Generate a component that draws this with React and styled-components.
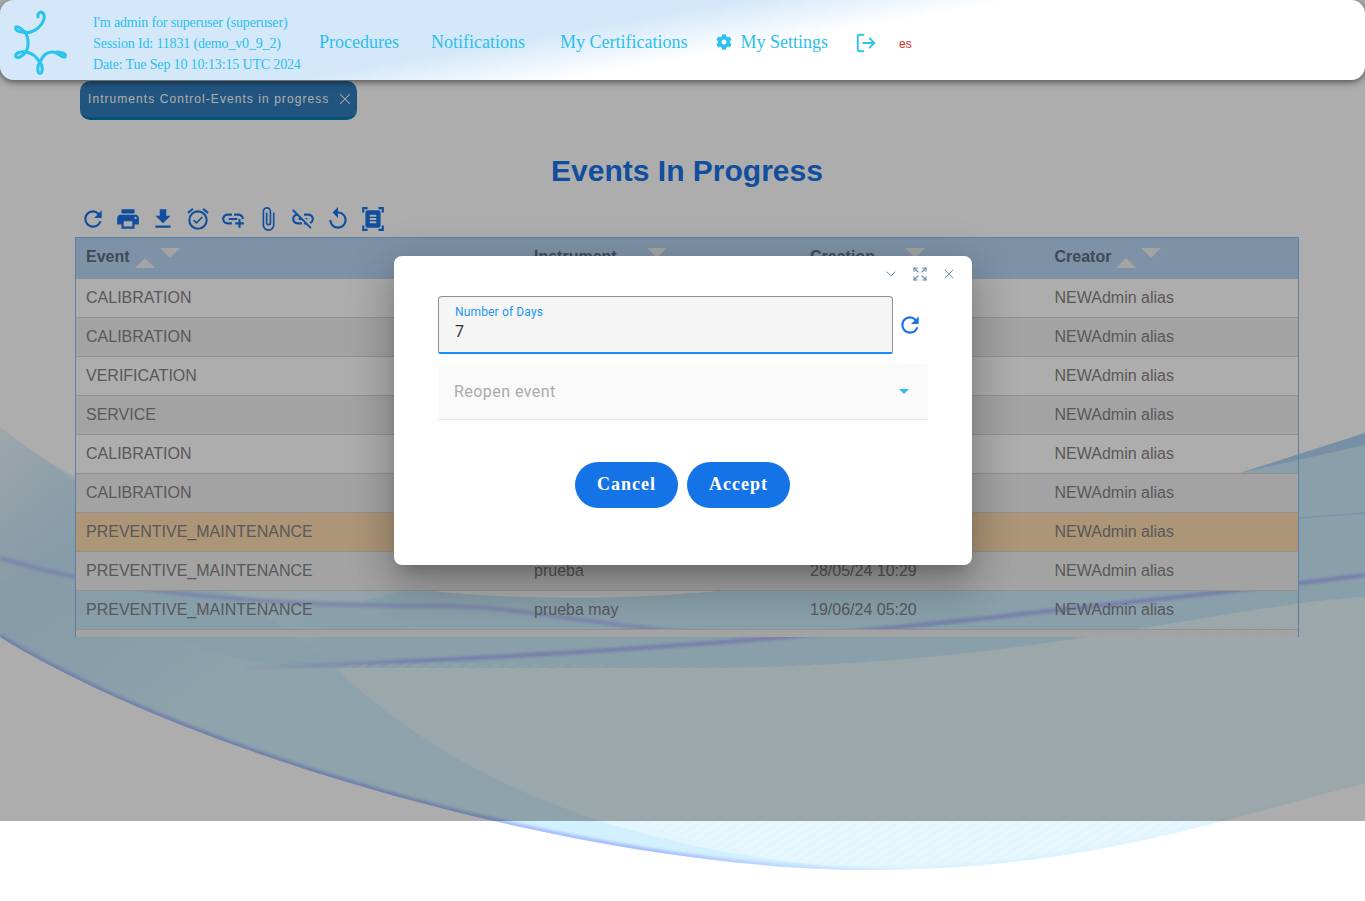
import styled, { createGlobalStyle } from "styled-components";
import { FaCog } from "react-icons/fa";
import { LogOut, ChevronDown, Expand, X } from "lucide-react";
import {
  MdRefresh,
  MdPrint,
  MdFileDownload,
  MdOutlineAlarmOn,
  MdAddLink,
  MdAttachFile,
  MdLinkOff,
  MdReplay,
  MdDocumentScanner,
} from "react-icons/md";

const GlobalStyle = createGlobalStyle`
  html, body {
    margin: 0;
    padding: 0;
    background: #fff;
    font-family: "Liberation Sans", Arial, sans-serif;
  }
`;

const Page = styled.div`
  position: relative;
  width: 1365px;
  height: 901px;
  overflow: hidden;
  background: #fff;
`;
const WaveLayer = styled.svg`
  position: absolute;
  inset: 0;
`;
const Backdrop = styled.div`
  position: absolute;
  left: 0;
  right: 0;
  top: 0;
  height: 821px;
  background: rgba(0, 0, 0, 0.32);
  z-index: 2;
`;
const Header = styled.header`
  position: relative;
  z-index: 3;
  height: 80px;
  box-sizing: border-box;
  display: flex;
  align-items: center;
  padding: 6px 0 0 12px;
  border-radius: 14px;
  background: linear-gradient(170deg, #d4e8f9 41%, #ffffff 56%);
  box-shadow: 0 2px 7px rgba(0, 0, 0, 0.55);
  font-family: "Liberation Serif", "Times New Roman", serif;
  color: #2bc0ee;
`;
const SessionInfo = styled.div`
  margin-left: 24px;
  font-size: 14px;
  line-height: 21px;
  letter-spacing: -0.16px;
  white-space: nowrap;
  width: 226px;
`;
const NavItem = styled.a`
  margin-left: ${(p) => p.$gap}px;
  display: flex;
  align-items: center;
  gap: 8px;
  font-size: 18px;
  white-space: nowrap;
  padding-bottom: 2px;
`;
const LogoutLink = styled.a`
  margin-left: 27px;
  display: flex;
`;
const Lang = styled.span`
  margin: 2px 0 0 22px;
  font-family: "Liberation Sans", Arial, sans-serif;
  font-size: 12px;
  color: #e5291f;
`;
const Content = styled.main`
  position: relative;
  z-index: 1;
  margin-left: 75px;
  width: 1224px;
`;
const Tab = styled.div`
  margin: 1px 0 0 5px;
  width: 277px;
  height: 39px;
  box-sizing: border-box;
  display: flex;
  align-items: center;
  justify-content: space-between;
  padding: 0 3px 0 8px;
  border-radius: 10px;
  border-bottom: 3px solid #077cb3;
  background: #327dbb;
  color: #fff;
  font-size: 12px;
  letter-spacing: 1.06px;
  white-space: nowrap;
`;
const Title = styled.h1`
  margin: 33px 0 17px;
  font-size: 30px;
  line-height: 36px;
  font-weight: 700;
  text-align: center;
  color: #1a73e8;
`;
const Toolbar = styled.div`
  display: flex;
  gap: 9px;
  height: 26px;
  padding-left: 5px;
  margin-bottom: 5px;
  color: #1a73e8;
`;
const TableWrap = styled.div`
  height: 400px;
  box-sizing: border-box;
  overflow: hidden;
  border: 1px solid #8bbcf0;
  border-bottom: 0;
`;
const columns = "448px 276px 244.5px 1fr";
const HeadRow = styled.div`
  display: grid;
  grid-template-columns: ${columns};
  height: 41px;
  box-sizing: border-box;
  border-bottom: 1px solid #c9d6e6;
  background: #b8d7f7;
`;
const HeadCell = styled.div`
  display: flex;
  align-items: center;
  gap: 5px;
  padding: 0 0 2px 10px;
  font-size: 16px;
  font-weight: 700;
  color: #5d6d7d;
`;
const SortArrow = styled.span`
  position: relative;
  top: -4px;
  width: 0;
  height: 0;
  border-left: 10px solid transparent;
  border-right: 10px solid transparent;
  ${(p) =>
    p.$up
      ? "border-bottom: 10px solid #f2f2f2; margin-top: 20px;"
      : "border-top: 10px solid #f2f2f2;"}
`;
const Row = styled.div`
  display: grid;
  grid-template-columns: ${columns};
  align-items: center;
  height: 39px;
  box-sizing: border-box;
  border-bottom: 1px solid #d8d8d8;
  background: ${(p) => p.$bg};
  font-size: 16px;
  color: #848484;
`;
const Cell = styled.div`
  padding-left: 10px;
  white-space: nowrap;
`;
const Modal = styled.div`
  position: absolute;
  z-index: 4;
  left: 394px;
  top: 256px;
  width: 578px;
  height: 309px;
  box-sizing: border-box;
  padding: 10px 44px 0;
  border-radius: 8px;
  background: #fff;
  box-shadow: 0 11px 15px -7px rgba(0, 0, 0, 0.2),
    0 24px 38px 3px rgba(0, 0, 0, 0.14), 0 9px 46px 8px rgba(0, 0, 0, 0.12);
  font-family: Roboto, "Liberation Sans", sans-serif;
`;
const WindowControls = styled.div`
  display: flex;
  justify-content: flex-end;
  gap: 13px;
  height: 30px;
  margin-right: -29px;
  color: #5f8bb0;
`;
const FieldRow = styled.div`
  display: flex;
  align-items: center;
  gap: 4px;
  margin-bottom: 10px;
  color: #1a73e8;
`;
const TextField = styled.div`
  width: 455px;
  height: 58px;
  box-sizing: border-box;
  padding: 8px 16px 0;
  border: 1px solid #8f8f8f;
  border-bottom: 2px solid #1a8cff;
  border-radius: 4px 4px 2px 2px;
  background: #f5f5f5;
`;
const FieldLabel = styled.div`
  font-size: 12px;
  line-height: 15px;
  letter-spacing: 0.15px;
  color: #2196f3;
`;
const FieldValue = styled.div`
  margin-top: 2px;
  font-size: 16px;
  line-height: 19px;
  color: #333;
`;
const SelectField = styled.div`
  width: 490px;
  height: 56px;
  box-sizing: border-box;
  display: flex;
  align-items: center;
  justify-content: space-between;
  padding: 0 19px 0 16px;
  border-bottom: 1px solid #e5e5e5;
  border-radius: 4px 4px 0 0;
  background: #fafafa;
  font-size: 16px;
  letter-spacing: 0.45px;
  color: #aaa;
`;
const Caret = styled.span`
  width: 0;
  height: 0;
  border-left: 5px solid transparent;
  border-right: 5px solid transparent;
  border-top: 5px solid #2bc0ee;
`;
const Buttons = styled.div`
  display: flex;
  justify-content: center;
  gap: 9px;
  margin: 42px 0 0 -1px;
`;
const PillButton = styled.button`
  width: 103px;
  height: 46px;
  padding: 0 0 2px;
  border: 0;
  border-radius: 23px;
  background: #1573e8;
  color: #fff;
  font-family: "Liberation Serif", "Times New Roman", serif;
  font-size: 18px;
  font-weight: 700;
  letter-spacing: 1px;
`;

const rows = [
  { event: "CALIBRATION" },
  { event: "CALIBRATION" },
  { event: "VERIFICATION" },
  { event: "SERVICE" },
  { event: "CALIBRATION" },
  { event: "CALIBRATION" },
  { event: "PREVENTIVE_MAINTENANCE", late: true },
  { event: "PREVENTIVE_MAINTENANCE", instrument: "prueba", created: "28/05/24 10:29" },
  { event: "PREVENTIVE_MAINTENANCE", instrument: "prueba may", created: "19/06/24 05:20" },
];

const rowColor = (row, i) => {
  if (row.late) return "#ffdcb0";
  return i % 2 === 1 ? "#f0f0f0" : "transparent";
};

function Logo() {
  return (
    <svg width="57" height="68" viewBox="12 9 57 68" fill="none" stroke="#2bc4ee" strokeWidth="3" strokeLinecap="round">
      <path d="M38 17C37 13 41 11 43 13C46 17 43 24 38 28C33 32 28 33 25 32C21 30 19 25 16 27C14 30 20 33 25 32" />
      <path d="M25 32C29 38 29 47 26 52C22 57 17 59 15.500 56C15.500 53 21 51 26 52C32 53 37 57 40 63" />
      <path d="M40 63C42 56 47 52 53 52C58 52 61 58 65 57C67 54 62 52 57 52" />
      <path d="M40 62C37 66 37 73 40 73.500C43 73 43 66 40 62" />
    </svg>
  );
}

function Waves() {
  const lowerEdge = "M0 637C200 760 600 870 870 870C1080 870 1220 820 1365 783";
  const body =
    "M0 427C80 490 220 560 420 590C700 620 1000 560 1240 473L1365 433V783C1220 820 1080 870 870 870C600 870 200 760 0 637Z";
  return (
    <WaveLayer width="1365" height="901" viewBox="0 0 1365 901">
      <defs>
        <clipPath id="bodyClip">
          <path d={body} />
        </clipPath>
        <pattern id="hatch" width="7" height="7" patternUnits="userSpaceOnUse" patternTransform="rotate(-32)">
          <rect width="7" height="2.5" fill="#ffffff" opacity="0.2" />
        </pattern>
        <linearGradient id="edge" x1="0" x2="1" y1="0" y2="0">
          <stop offset="0" stopColor="#a9bdf8" />
          <stop offset="0.48" stopColor="#a4bcff" />
          <stop offset="0.66" stopColor="#d9f2ff" />
          <stop offset="1" stopColor="#e4f6fd" />
        </linearGradient>
        <linearGradient id="fan" gradientUnits="userSpaceOnUse" x1="0" y1="430" x2="200" y2="700">
          <stop offset="0" stopColor="#eaf7fc" />
          <stop offset="0.4" stopColor="#c6e4f7" />
          <stop offset="0.7" stopColor="#c8e8f8" />
          <stop offset="1" stopColor="#d2f0fd" />
        </linearGradient>
        <linearGradient id="upper" x1="0" x2="1" y1="0" y2="0">
          <stop offset="0" stopColor="#c6eafc" stopOpacity="0" />
          <stop offset="0.08" stopColor="#c6eafc" stopOpacity="0.4" />
          <stop offset="0.25" stopColor="#c6eafc" stopOpacity="0.85" />
          <stop offset="1" stopColor="#c6eafc" stopOpacity="0.85" />
        </linearGradient>
        <linearGradient id="streak" gradientUnits="userSpaceOnUse" x1="240" y1="0" x2="1365" y2="0">
          <stop offset="0" stopColor="#aab8fb" stopOpacity="0" />
          <stop offset="0.15" stopColor="#aab8fb" />
          <stop offset="1" stopColor="#aab8fb" />
        </linearGradient>
        <filter id="soft" x="-5%" y="-20%" width="110%" height="140%">
          <feGaussianBlur stdDeviation="1.6" />
        </filter>
      </defs>
      <path d={body} fill="#e4f6fd" />
      <path d="M0 427C90 495 250 600 335 667C430 760 590 850 870 870C600 870 200 760 0 637Z" fill="url(#fan)" />
      <path d="M0 427C80 490 220 560 420 590C700 620 1000 560 1240 473L1365 433V597C1299 600 1200 620 1081 638C1000 650 870 668 700 668C550 668 400 668 300 668C200 660 80 610 0 540Z" fill="url(#upper)" />
      <path d="M1240 473L1365 433V445L1240 473Z" fill="#b2d4f4" />
      <path d="M220 591H400C350 610 270 607 220 591Z" fill="#ffffff" opacity="0.35" />
      <path d="M1299 518L1365 513" stroke="#b8dcf8" strokeWidth="2" />
      <path d="M240 668C500 660 800 640 1040 612C1150 600 1250 590 1365 575" stroke="url(#streak)" strokeWidth="4" fill="none" filter="url(#soft)" />
      <path d="M0 558C80 582 200 606 440 606C540 606 620 635 760 634" stroke="#b4c6fa" strokeWidth="4" fill="none" filter="url(#soft)" />
      <path d="M1365 433V783C1220 820 1080 870 870 870C700 860 560 800 393 710L335 667C420 650 800 690 1081 638C1200 620 1299 600 1365 597Z" fill="url(#hatch)" />
      <g clipPath="url(#bodyClip)">
        <path d={lowerEdge} stroke="url(#edge)" strokeWidth="6" fill="none" filter="url(#soft)" />
      </g>
    </WaveLayer>
  );
}

export default function App() {
  return (
    <Page>
      <GlobalStyle />
      <Waves />
      <Backdrop />
      <Header>
        <Logo />
        <SessionInfo>
          <div>I'm admin for superuser (superuser)</div>
          <div>Session Id: 11831 (demo_v0_9_2)</div>
          <div>Date: Tue Sep 10 10:13:15 UTC 2024</div>
        </SessionInfo>
        <NavItem $gap={0}>Procedures</NavItem>
        <NavItem $gap={32}>Notifications</NavItem>
        <NavItem $gap={35}>My Certifications</NavItem>
        <NavItem $gap={29}>
          <FaCog size={16} />
          My Settings
        </NavItem>
        <LogoutLink>
          <LogOut size={22} strokeWidth={2} />
        </LogoutLink>
        <Lang>es</Lang>
      </Header>
      <Content>
        <Tab>
          Intruments Control-Events in progress
          <X size={18} strokeWidth={1.4} />
        </Tab>
        <Title>Events In Progress</Title>
        <Toolbar>
          <MdRefresh size={26} />
          <MdPrint size={26} />
          <MdFileDownload size={26} />
          <MdOutlineAlarmOn size={26} />
          <MdAddLink size={26} />
          <MdAttachFile size={26} />
          <MdLinkOff size={26} />
          <MdReplay size={26} />
          <MdDocumentScanner size={26} />
        </Toolbar>
        <TableWrap>
          <HeadRow>
            {["Event", "Instrument", "Creation", "Creator"].map((name) => (
              <HeadCell key={name}>
                {name}
                <SortArrow $up />
                <SortArrow />
              </HeadCell>
            ))}
          </HeadRow>
          {rows.map((row, i) => (
            <Row key={i} $bg={rowColor(row, i)}>
              <Cell>{row.event}</Cell>
              <Cell>{row.instrument}</Cell>
              <Cell>{row.created}</Cell>
              <Cell>NEWAdmin alias</Cell>
            </Row>
          ))}
          <Row $bg="#f0f0f0" />
        </TableWrap>
      </Content>
      <Modal>
        <WindowControls>
          <ChevronDown size={16} strokeWidth={1.5} />
          <Expand size={16} strokeWidth={1.6} />
          <X size={16} strokeWidth={1.4} />
        </WindowControls>
        <FieldRow>
          <TextField>
            <FieldLabel>Number of Days</FieldLabel>
            <FieldValue>7</FieldValue>
          </TextField>
          <MdRefresh size={26} />
        </FieldRow>
        <SelectField>
          Reopen event
          <Caret />
        </SelectField>
        <Buttons>
          <PillButton>Cancel</PillButton>
          <PillButton>Accept</PillButton>
        </Buttons>
      </Modal>
    </Page>
  );
}
